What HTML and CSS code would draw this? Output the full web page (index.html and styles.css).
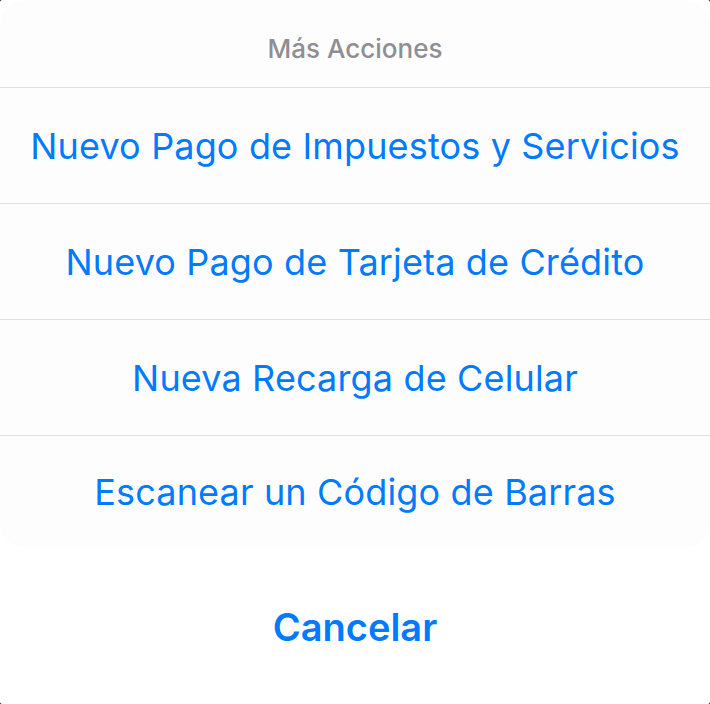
FILE: index.html
```html
<!DOCTYPE html>
<html lang="es">
<head>
<meta charset="utf-8">
<link rel="stylesheet" href="styles.css">
</head>
<body>
<div class="screen">
  <div class="sheet">
    <div class="title">Más Acciones</div>
    <div class="action">Nuevo Pago de Impuestos y Servicios</div>
    <div class="action">Nuevo Pago de Tarjeta de Crédito</div>
    <div class="action">Nueva Recarga de Celular</div>
    <div class="action">Escanear un Código de Barras</div>
  </div>
  <div class="cancel">Cancelar</div>
</div>
</body>
</html>
```
FILE: styles.css
```css
html, body {
  margin: 0;
  padding: 0;
  background: #000;
}
.screen {
  width: 710px;
  height: 704px;
  background: #fff;
  border-radius: 2px;
  overflow: hidden;
  display: flex;
  flex-direction: column;
  font-family: Inter, Roboto, "Liberation Sans", sans-serif;
}
.sheet {
  background: #fdfdfd;
  border-radius: 26px;
  display: flex;
  flex-direction: column;
}
.title {
  height: 88px;
  padding-top: 9px;
  display: flex;
  align-items: center;
  justify-content: center;
  color: #8e8e93;
  font-size: 26px;
  font-weight: 500;
  border-bottom: 1px solid #e0e0e0;
  box-sizing: border-box;
}
.action {
  height: 116px;
  display: flex;
  align-items: center;
  justify-content: center;
  color: #007aff;
  font-size: 36px;
  letter-spacing: 0.15px;
  border-bottom: 1px solid #e0e0e0;
  box-sizing: border-box;
}
.action:last-child {
  border-bottom: none;
  height: 112px;
}
.cancel {
  flex: 1;
  display: flex;
  align-items: center;
  justify-content: center;
  color: #007aff;
  font-size: 38px;
  font-weight: 600;
  padding-top: 2px;
}
```
